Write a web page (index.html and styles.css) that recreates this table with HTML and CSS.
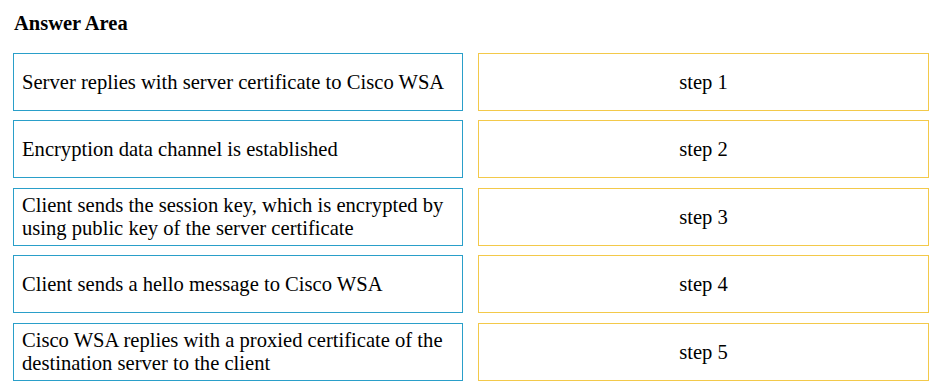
FILE: index.html
```html
<!DOCTYPE html>
<html>
<head>
<meta charset="utf-8">
<link rel="stylesheet" href="styles.css">
</head>
<body>
<div class="page">
  <h1 class="title">Answer Area</h1>
  <div class="grid">
    <div class="item">Server replies with server certificate to Cisco WSA</div>
    <div class="slot">step 1</div>
    <div class="item">Encryption data channel is established</div>
    <div class="slot">step 2</div>
    <div class="item two">Client sends the session key, which is encrypted by using public key of the server certificate</div>
    <div class="slot">step 3</div>
    <div class="item">Client sends a hello message to Cisco WSA</div>
    <div class="slot">step 4</div>
    <div class="item two">Cisco WSA replies with a proxied certificate of the destination server to the client</div>
    <div class="slot">step 5</div>
  </div>
</div>
</body>
</html>
```
FILE: styles.css
```css
html, body {
  margin: 0;
  padding: 0;
  background: #ffffff;
}
.page {
  width: 948px;
  height: 388px;
  font-family: "Liberation Serif", "Times New Roman", serif;
  color: #000;
  padding: 0 0 0 13px;
  box-sizing: border-box;
}
.title {
  margin: 0;
  padding: 11px 0 0 1px;
  height: 53px;
  box-sizing: border-box;
  font-size: 20.5px;
  font-weight: bold;
  line-height: 24px;
}
.grid {
  display: grid;
  grid-template-columns: 450px 451px;
  grid-template-rows: 67px 68px 67px 68px 58px;
  align-items: start;
  column-gap: 15px;
}
.item,
.slot {
  height: 58px;
  box-sizing: border-box;
  display: flex;
  align-items: center;
  font-size: 20.6px;
  line-height: 23px;
}
.item {
  border: 1px solid #2a9fc9;
  padding: 0 8px;
}
.item.two {
  align-items: flex-start;
  padding-top: 5px;
}
.slot {
  border: 1px solid #f3c94a;
  justify-content: center;
}
```
